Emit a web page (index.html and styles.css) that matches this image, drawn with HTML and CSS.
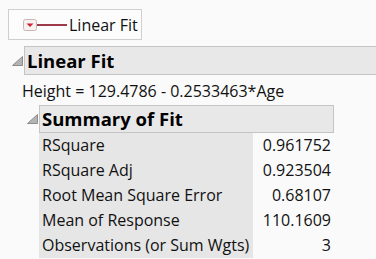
FILE: index.html
```html
<!DOCTYPE html>
<html lang="en">
    <head>
        <meta charset="UTF-8">
        <title>Linear Fit</title>
        <link rel="stylesheet" href="styles.css">
    </head>
    <body>
        <div class="legend">
            <span class="menuBtn">
                <svg width="14" height="12" viewBox="0 0 14 12">
                    <rect x="0.5" y="0.5" width="13" height="11" rx="2" fill="#f6f2f2" stroke="#c9b4b6"/>
                    <polygon points="3.5,4.5 10.5,4.5 7,8" fill="#d2232e"/>
                </svg>
            </span>
            <span class="legendLine"></span>
            <span class="legendText">Linear Fit</span>
        </div>

        <div class="outline">
            <div class="outlineHead">
                <svg class="disclosure" width="11" height="10" viewBox="0 0 11 10">
                    <polygon points="10.5,0.5 10.5,9.5 0.5,9.5" fill="#b4b4b4" stroke="#8c8c8c"/>
                </svg>
                <div class="outlineTitle wide">Linear Fit</div>
            </div>
            <div class="outlineBody">
                <div class="equation">Height = 129.4786 - 0.2533463*Age</div>

                <div class="outline">
                    <div class="outlineHead">
                        <svg class="disclosure" width="11" height="10" viewBox="0 0 11 10">
                            <polygon points="10.5,0.5 10.5,9.5 0.5,9.5" fill="#b4b4b4" stroke="#8c8c8c"/>
                        </svg>
                        <div class="outlineTitle">Summary of Fit</div>
                    </div>
                    <table class="fitTable">
                        <tr><td class="label">RSquare</td><td class="value">0.961752</td></tr>
                        <tr><td class="label">RSquare Adj</td><td class="value">0.923504</td></tr>
                        <tr><td class="label">Root Mean Square Error</td><td class="value">0.68107</td></tr>
                        <tr><td class="label">Mean of Response</td><td class="value">110.1609</td></tr>
                        <tr><td class="label">Observations (or Sum Wgts)</td><td class="value">3</td></tr>
                    </table>
                </div>
            </div>
        </div>
    </body>
</html>
```

FILE: styles.css
```css
body {
    font-family: "Open Sans", "Noto Sans", sans-serif;
    font-size: 16px;
    color: #111;
    background-color: #fafafa;
    margin: 0;
    padding: 9px 0 0 8px;
    overflow: hidden;
}

.legend {
    display: inline-flex;
    align-items: center;
    box-sizing: border-box;
    width: 134px;
    height: 31px;
    padding-left: 14px;
    border: 1px solid #cfcfcf;
    background-color: #fcfcfc;
    white-space: nowrap;
}

.menuBtn {
    display: flex;
    flex-shrink: 0;
}

.legendLine {
    flex-shrink: 0;
    width: 30px;
    height: 2px;
    background-color: #9e3a48;
}

.legendText {
    margin-left: 2px;
}

.outlineHead {
    display: flex;
    align-items: center;
}

.disclosure {
    margin: 0 1px 0 4px;
    flex-shrink: 0;
}

.outlineTitle {
    box-sizing: border-box;
    width: 295px;
    height: 28px;
    padding: 0 2px;
    border: 1px solid #c4c4c4;
    background-color: #e8e8e8;
    font-size: 18.5px;
    font-weight: bold;
    line-height: 26px;
    color: #000;
}

.outlineTitle.wide {
    width: 360px;
    height: 29px;
    line-height: 27px;
    border-right: none;
}

.outline {
    margin-top: 6px;
}

.outline .outline {
    margin: 2px 0 0 15px;
}

.equation {
    padding: 4px 0 0 14px;
    line-height: 24px;
}

.fitTable {
    margin-left: 16px;
    width: 295px;
    border-collapse: collapse;
}

.fitTable td {
    height: 24px;
    padding: 1px 3px 0;
    line-height: 23.5px;
}

.label {
    background-color: #e6e6e6;
    width: 208px;
}

.value {
    text-align: right;
    padding-right: 9px;
}
```
